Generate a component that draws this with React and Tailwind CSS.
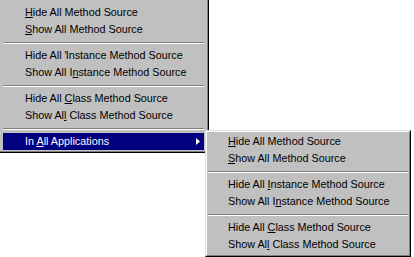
import React from "react";

function Item({ children, sub }) {
  return (
    <div className={`h-[17px] flex items-center whitespace-nowrap ${sub ? "pl-[20px]" : "pl-[22px]"}`}>
      <span>{children}</span>
    </div>
  );
}

function Sep() {
  return (
    <div className="h-[9px] pt-[4px]">
      <div className="h-[2px] border-t border-t-[#808080] border-b border-b-white" />
    </div>
  );
}

export default function App() {
  return (
    <div className="relative w-[414px] h-[257px] bg-white overflow-hidden font-['Liberation_Sans',Arial,sans-serif] text-[10.8px] leading-none text-black">
      {/* Main menu */}
      <div className="w-[209px] h-[153px] bg-[#c0c0c0] border-r border-b border-black">
        <div className="h-full border-r border-b border-[#808080] pt-[4px] pl-[3px] pr-[3px] pb-[1px]">
          <Item><u>H</u>ide All Method Source</Item>
          <Item><u>S</u>how All Method Source</Item>
          <Sep />
          <Item>Hide All <span className="mr-[-1px]">'</span>Instance Method Source</Item>
          <Item>Show All I<u>n</u>stance Method Source</Item>
          <Sep />
          <Item>Hide All <u>C</u>lass Method Source</Item>
          <Item>Show Al<u>l</u> Class Method Source</Item>
          <Sep />
          <div className="h-[17px] flex items-center justify-between bg-[#000080] text-white pl-[22px] pr-[4px] whitespace-nowrap">
            <span>In <u>A</u>ll Applications</span>
            <svg width="4" height="7" viewBox="0 0 4 7" className="block">
              <path d="M0 0 L4 3.5 L0 7 Z" fill="white" />
            </svg>
          </div>
        </div>
      </div>

      {/* Submenu */}
      <div className="absolute left-[205px] top-[130px] w-[206px] h-[127px] bg-[#c0c0c0] border-t border-l border-t-[#dfdfdf] border-l-[#dfdfdf] border-r border-b border-r-black border-b-black">
        <div className="h-full border-t border-l border-t-white border-l-white border-r border-b border-r-[#808080] border-b-[#808080] p-[1px]">
          <Item sub><u>H</u>ide All Method Source</Item>
          <Item sub><u>S</u>how All Method Source</Item>
          <Sep />
          <Item sub>Hide All <u>I</u>nstance Method Source</Item>
          <Item sub>Show All I<u>n</u>stance Method Source</Item>
          <Sep />
          <Item sub>Hide All <u>C</u>lass Method Source</Item>
          <Item sub>Show Al<u>l</u> Class Method Source</Item>
        </div>
      </div>
    </div>
  );
}
